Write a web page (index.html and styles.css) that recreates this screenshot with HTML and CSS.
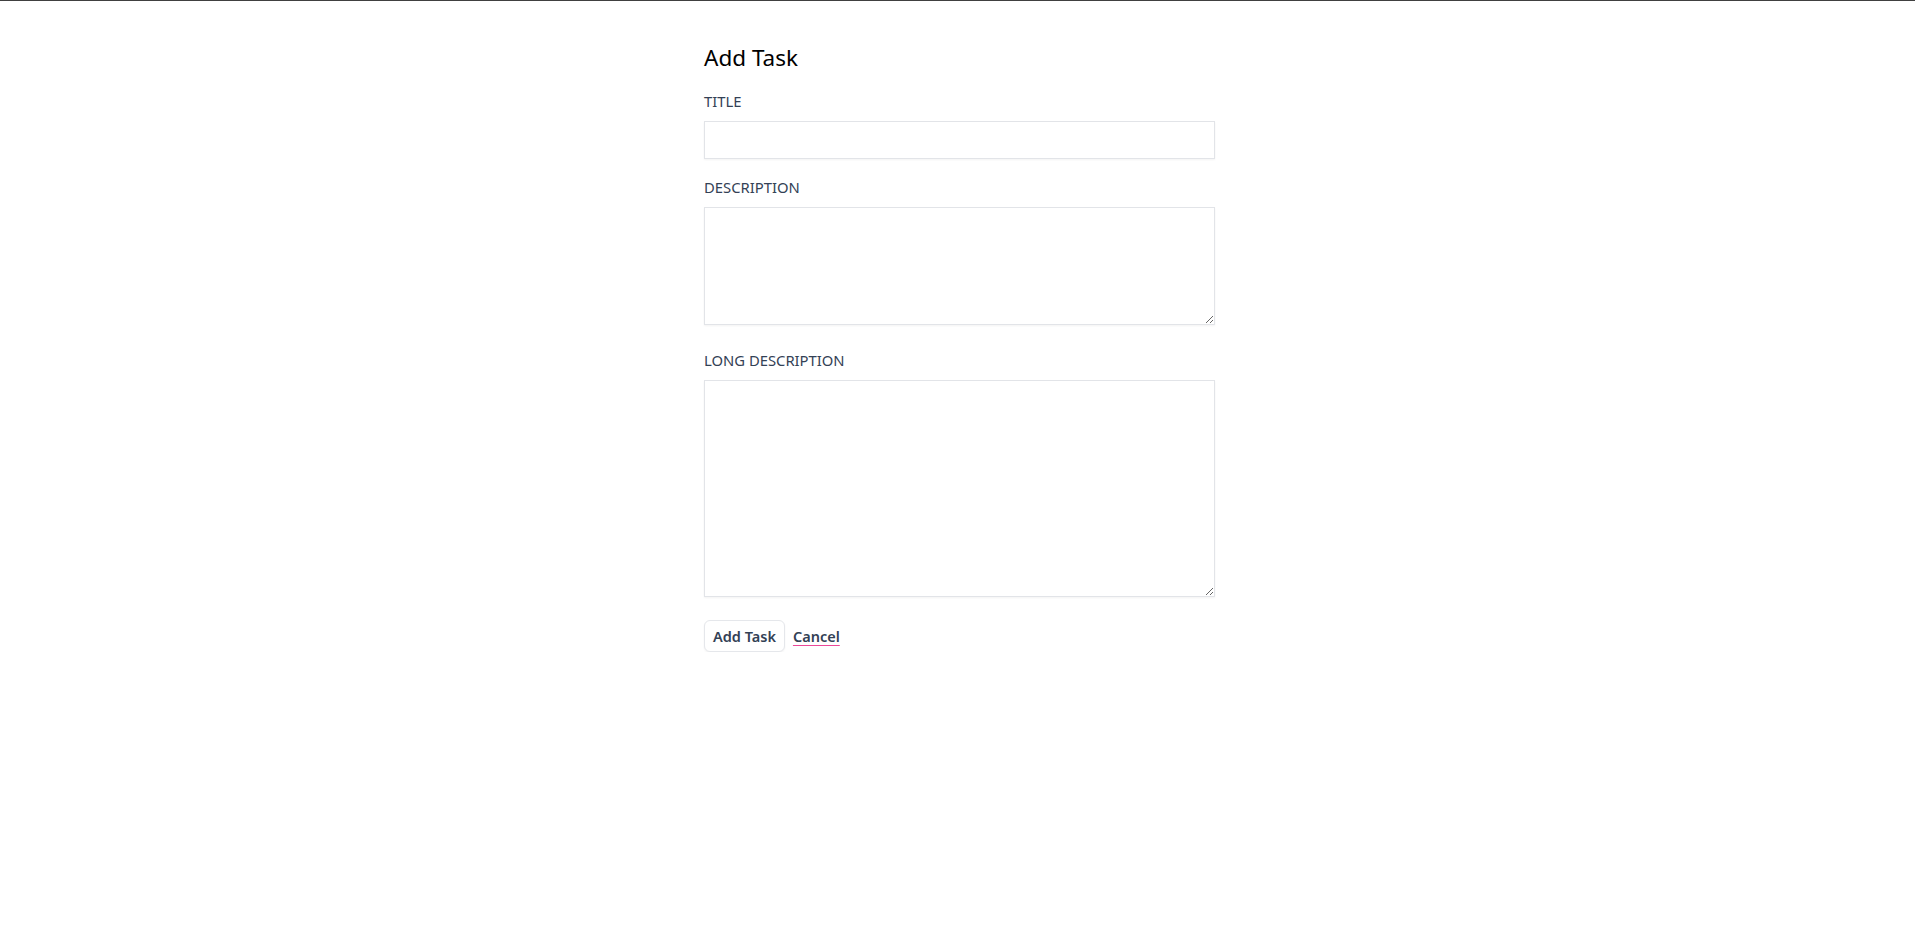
FILE: index.html
```html
<!DOCTYPE html>
<html lang="en">
<head>
<meta charset="utf-8">
<title>Add Task</title>
<link rel="stylesheet" href="styles.css">
</head>
<body>
<div class="topline"></div>
<main class="page">
  <form class="task-form">
    <h1 class="form-title">Add Task</h1>
    <div class="field">
      <label class="field-label" for="title">Title</label>
      <input class="field-input" id="title" type="text">
    </div>
    <div class="field">
      <label class="field-label" for="description">Description</label>
      <textarea class="field-input area-short" id="description"></textarea>
    </div>
    <div class="field">
      <label class="field-label" for="long">Long Description</label>
      <textarea class="field-input area-long" id="long"></textarea>
    </div>
    <div class="actions">
      <button class="btn" type="button">Add Task</button>
      <a class="cancel" href="#">Cancel</a>
    </div>
  </form>
</main>
</body>
</html>
```

FILE: styles.css
```css
* { box-sizing: border-box; }

html, body {
  margin: 0;
  padding: 0;
  background: #ffffff;
}

body {
  font-family: "Noto Sans", "Open Sans", "Liberation Sans", sans-serif;
  color: #111827;
}

.topline {
  height: 1px;
  background: #404040;
}

.page {
  display: flex;
  justify-content: center;
  padding-top: 41px;
  padding-left: 4px;
}

.task-form {
  width: 511px;
  display: flex;
  flex-direction: column;
}

.form-title {
  margin: 0 0 17px 0;
  font-size: 22.5px;
  line-height: 32px;
  font-weight: 400;
  color: #000000;
}

.field {
  display: flex;
  flex-direction: column;
  margin-bottom: 18px;
}

.field-label {
  font-size: 14.8px;
  line-height: 20px;
  text-transform: uppercase;
  color: #334155;
  margin-bottom: 10px;
}

.field-input {
  display: block;
  width: 100%;
  height: 38px;
  border: 1px solid #e2e4e8;
  border-radius: 0;
  box-shadow: 0 1px 2px rgba(0, 0, 0, 0.05);
  font: inherit;
  padding: 6px 10px;
  background: #ffffff;
}

.area-short {
  height: 118px;
  margin-bottom: 7px;
}

.area-long {
  height: 217px;
  margin-bottom: 5px;
}

.actions {
  display: flex;
  align-items: center;
  gap: 8px;
}

.btn {
  font: inherit;
  font-size: 14.5px;
  font-weight: 600;
  color: #334155;
  background: #ffffff;
  border: 1px solid #e5e7eb;
  border-radius: 6px;
  box-shadow: 0 1px 2px rgba(0, 0, 0, 0.05);
  height: 32px;
  padding: 0 8px;
}

.cancel {
  font-size: 14.5px;
  font-weight: 600;
  color: #334155;
  text-decoration: underline;
  text-decoration-color: #ec4899;
  text-underline-offset: 3px;
}
```
